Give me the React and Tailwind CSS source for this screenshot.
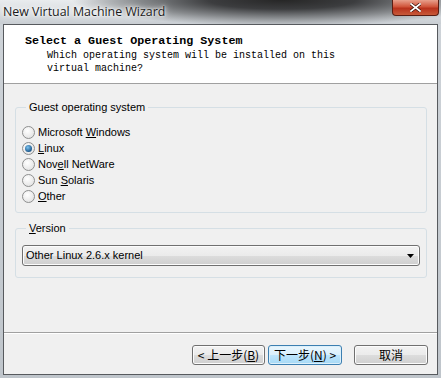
import React from 'react';

const ui = "font-['Liberation_Sans',Arial,sans-serif]";
const mono = "font-['Liberation_Mono','Courier_New',monospace]";
const cjk = "font-['Noto_Sans_CJK_SC','Liberation_Sans',sans-serif]";

const Radio = ({ checked, children }) => (
  <div className="flex items-center h-[16px]">
    <div className="w-[13px] h-[13px] rounded-full border border-[#8e8f8f] bg-[radial-gradient(circle_at_40%_35%,#ffffff,#dcdcdc)] flex items-center justify-center">
      {checked && (
        <div className="w-[7px] h-[7px] rounded-full bg-[radial-gradient(circle_at_40%_35%,#7ec4f0,#1d5a8e_70%,#0f3a63)]" />
      )}
    </div>
    <span className={`ml-[3px] text-[11px] text-[#000] ${ui}`}>{children}</span>
  </div>
);

const Btn = ({ children, focused, className = '' }) => (
  <div
    className={`h-[20px] flex items-center justify-center rounded-[3px] border text-[12px] ${cjk} ${
      focused
        ? 'border-[#3c7fb1] bg-[linear-gradient(#eaf6fd,#d9f0fc_50%,#bee6fd_50%,#a7d9f5)] shadow-[inset_0_0_0_1px_#dcf0fb]'
        : 'border-[#707070] bg-[linear-gradient(#f2f2f2,#ebebeb_50%,#dddddd_50%,#cfcfcf)] shadow-[inset_0_0_0_1px_#fcfcfc]'
    } ${className}`}
  >
    {children}
  </div>
);

export default function App() {
  return (
    <div className="w-[441px] h-[378px] flex flex-col overflow-hidden bg-[linear-gradient(#cfd4d9,#bfc5cb)]">
      {/* title bar */}
      <div className="h-[24px] flex items-start justify-between bg-[radial-gradient(ellipse_210px_26px_at_64%_0%,#262626,#3c3d3f_35%,#8a8d90_70%,rgba(210,214,218,0)_100%),linear-gradient(#e9ecee,#c9ced3)]">
        <span className={`ml-[3px] mt-[4px] text-[12.4px] leading-[16px] text-[#1a1a1a] font-['Open_Sans',sans-serif] [text-shadow:0_0_8px_#ffffff,0_0_4px_#ffffff,0_0_2px_#ffffff]`}>
          New Virtual Machine Wizard
        </span>
        <div className="mr-[2px] w-[47px] h-[16px] rounded-b-[4px] border border-t-0 border-[#5b1d12] bg-[linear-gradient(#e8a08c,#d0543a_45%,#b8321c_55%,#c85a3a)] flex items-center justify-center">
          <svg width="11" height="9" viewBox="0 0 11 9">
            <path d="M1 1 L10 8 M10 1 L1 8" stroke="#3a0d05" strokeWidth="3.2" strokeLinecap="square" />
            <path d="M1 1 L10 8 M10 1 L1 8" stroke="#ffffff" strokeWidth="1.8" strokeLinecap="square" />
          </svg>
        </div>
      </div>

      {/* window body */}
      <div className="mx-[3px] h-[351px] border border-[#575a5e] flex flex-col bg-[#f0f0f0]">
        <div className="h-[59px] bg-white border-b border-[#a0a0a0] pt-[9px]">
          <div className={`pl-[21px] text-[11.7px] leading-[14px] font-bold text-black ${mono}`}>
            Select a Guest Operating System
          </div>
          <div className={`pl-[43px] mt-[1px] text-[10px] leading-[13px] text-black ${mono}`}>
            <div>Which operating system will be installed on this</div>
            <div>virtual machine?</div>
          </div>
        </div>

        <fieldset className="mt-[16px] ml-[11px] mr-[10px] border border-[#d5dfe5] rounded-[3px] pl-[6px] pr-[6px] pt-[9px] pb-[8px]">
          <legend className={`ml-[4px] px-[3px] text-[11px] leading-[15px] ${ui}`}>Guest operating system</legend>
          <Radio>Microsoft <u>W</u>indows</Radio>
          <Radio checked><u>L</u>inux</Radio>
          <Radio>Nov<u>e</u>ll NetWare</Radio>
          <Radio>Sun <u>S</u>olaris</Radio>
          <Radio><u>O</u>ther</Radio>
        </fieldset>

        <fieldset className="mt-[8px] ml-[11px] mr-[10px] border border-[#d5dfe5] rounded-[3px] pl-[6px] pr-[6px] pt-[9px] pb-[11px]">
          <legend className={`ml-[4px] px-[3px] text-[11px] leading-[15px] ${ui}`}><u>V</u>ersion</legend>
          <div className="h-[21px] rounded-[3px] border border-[#707070] bg-[linear-gradient(#f2f2f2,#ebebeb_50%,#dddddd_50%,#cfcfcf)] shadow-[inset_0_0_0_1px_#fcfcfc] flex items-center justify-between pl-[3px] pr-[5px]">
            <span className={`text-[11px] ${ui}`}>Other Linux 2.6.x kernel</span>
            <svg width="7" height="4" viewBox="0 0 7 4">
              <path d="M0 0 H7 L3.5 4 Z" fill="#000" />
            </svg>
          </div>
        </fieldset>

        <div className="flex-1" />

        <div className="h-[42px] border-t border-[#a0a0a0] shadow-[inset_0_1px_0_#ffffff] flex items-start justify-end pt-[12px] pr-[9px]">
          <Btn className="w-[73px]">&lt; 上一步(<u>B</u>)</Btn>
          <Btn focused className="w-[74px] ml-[3px]">下一步(<u>N</u>) &gt;</Btn>
          <Btn className="w-[74px] ml-[12px]">取消</Btn>
        </div>
      </div>
    </div>
  );
}
